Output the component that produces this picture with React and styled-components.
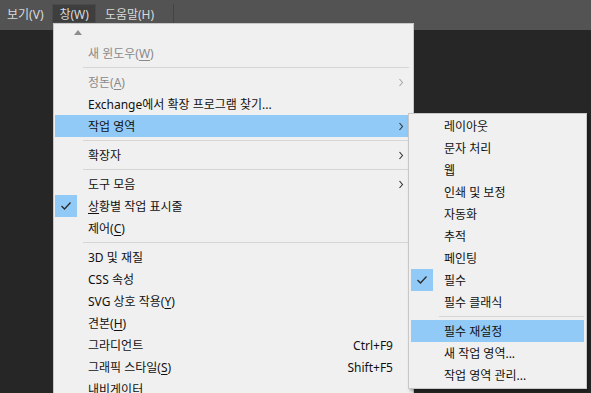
import React from 'react'
import styled, { createGlobalStyle } from 'styled-components'

const GlobalStyle = createGlobalStyle`
  html, body {
    margin: 0;
    padding: 0;
    background: #262626;
  }
  body {
    font-family: "Noto Sans", "Noto Sans CJK KR", sans-serif;
  }
`

const Page = styled.div`
  position: relative;
  width: 591px;
  height: 393px;
  overflow: hidden;
  background: #262626;
`

const MenuBar = styled.div`
  height: 30px;
  background: #535353;
  display: flex;
  align-items: flex-start;
  padding-top: 4px;
  box-sizing: border-box;
`

const BarItem = styled.div`
  height: 19px;
  display: flex;
  align-items: center;
  padding: 0 6px;
  box-sizing: border-box;
  font-size: 12px;
  color: #dadada;
  background: ${p => (p.$active ? '#3e3e3e' : 'transparent')};
  border: 1px solid ${p => (p.$active ? '#4a4a4a' : 'transparent')};
  margin-right: 2px;
`

const BarDivider = styled.div`
  width: 1px;
  height: 20px;
  background: #444;
  margin-left: 10px;
`

const Dropdown = styled.div`
  position: absolute;
  left: 53px;
  top: 23px;
  width: 361px;
  background: #f0f0f0;
  border: 1px solid #c8c8c8;
  box-sizing: border-box;
  padding: 0 4px 4px 1px;
`

const Flyout = styled.div`
  position: absolute;
  left: 408px;
  top: 113px;
  width: 179px;
  background: #f0f0f0;
  border: 1px solid #c8c8c8;
  box-sizing: border-box;
  padding: 1px 2px 2px 2px;
  box-shadow: 2px 2px 3px rgba(0, 0, 0, 0.35);
`

const ArrowArea = styled.div`
  height: 18px;
  display: flex;
  align-items: center;
  padding-left: 19px;
`

const UpArrow = styled.div`
  width: 0;
  height: 0;
  border-left: 4px solid transparent;
  border-right: 4px solid transparent;
  border-bottom: 5px solid #8e8e8e;
  margin-top: -2px;
`

const Row = styled.div`
  height: 22px;
  display: flex;
  align-items: center;
  font-size: 12px;
  color: ${p => (p.$disabled ? '#8a8a8a' : '#111')};
  background: ${p => (p.$hot ? '#91c9f7' : 'transparent')};
`

const CheckCell = styled.div`
  width: 22px;
  height: 22px;
  flex: none;
  display: flex;
  align-items: center;
  justify-content: center;
  background: ${p => (p.$on ? '#91c9f7' : 'transparent')};
`

const Label = styled.div`
  flex: 1;
  margin-left: 11px;
  white-space: nowrap;
`

const Shortcut = styled.div`
  white-space: nowrap;
`

const ArrowCell = styled.div`
  width: 16px;
  flex: none;
  display: flex;
  align-items: center;
  justify-content: center;
`

const Separator = styled.div`
  height: 1px;
  background: #d5d5d5;
  margin: 3px 0 3px ${p => p.$indent}px;
`

const U = styled.span`
  text-decoration: underline;
  text-underline-offset: 2px;
`

const Check = () => (
  <svg width="12" height="10" viewBox="0 0 12 10">
    <polyline points="1.5,5 4.5,8 10.5,1.5" fill="none" stroke="#2b2b2b" strokeWidth="1.3" />
  </svg>
)

const Chevron = ({ dim }) => (
  <svg width="6" height="9" viewBox="0 0 6 9">
    <polyline points="1.5,1 4.5,4.5 1.5,8" fill="none" stroke={dim ? '#a8a8a8' : '#333'} strokeWidth="1.1" />
  </svg>
)

const mainItems = [
  { label: <>새 윈도우(<U>W</U>)</>, disabled: true },
  'sep',
  { label: <>정돈(<U>A</U>)</>, disabled: true, sub: true },
  { label: 'Exchange에서 확장 프로그램 찾기...' },
  { label: '작업 영역', sub: true, hot: true },
  'sep',
  { label: '확장자', sub: true },
  'sep',
  { label: '도구 모음', sub: true },
  { label: <><U>상</U>황별 작업 표시줄</>, checked: true },
  { label: <>제어(<U>C</U>)</> },
  'sep',
  { label: '3D 및 재질' },
  { label: 'CSS 속성' },
  { label: <>SVG 상호 작용(<U>Y</U>)</> },
  { label: <>견본(<U>H</U>)</> },
  { label: '그라디언트', shortcut: 'Ctrl+F9' },
  { label: <>그래픽 스타일(<U>S</U>)</>, shortcut: 'Shift+F5' },
  { label: '내비게이터' },
]

const workspaceItems = [
  { label: '레이아웃' },
  { label: '문자 처리' },
  { label: '웹' },
  { label: '인쇄 및 보정' },
  { label: '자동화' },
  { label: '추적' },
  { label: '페인팅' },
  { label: '필수', checked: true },
  { label: '필수 클래식' },
  'sep',
  { label: '필수 재설정', hot: true },
  { label: '새 작업 영역...' },
  { label: '작업 영역 관리...' },
]

const MenuItems = ({ items, indent, arrows }) =>
  items.map((item, i) =>
    item === 'sep' ? (
      <Separator key={i} $indent={indent} />
    ) : (
      <Row key={i} $hot={item.hot} $disabled={item.disabled}>
        <CheckCell $on={item.checked}>{item.checked && <Check />}</CheckCell>
        <Label>{item.label}</Label>
        {item.shortcut && <Shortcut>{item.shortcut}</Shortcut>}
        {arrows && <ArrowCell>{item.sub && <Chevron dim={item.disabled} />}</ArrowCell>}
      </Row>
    )
  )

export default function App() {
  return (
    <Page>
      <GlobalStyle />
      <MenuBar>
        <BarItem>보기(V)</BarItem>
        <BarItem $active>창(W)</BarItem>
        <BarItem>도움말(H)</BarItem>
        <BarDivider />
      </MenuBar>

      <Dropdown>
        <ArrowArea>
          <UpArrow />
        </ArrowArea>
        <MenuItems items={mainItems} indent={28} arrows />
      </Dropdown>

      <Flyout>
        <MenuItems items={workspaceItems} indent={28} />
      </Flyout>
    </Page>
  )
}
